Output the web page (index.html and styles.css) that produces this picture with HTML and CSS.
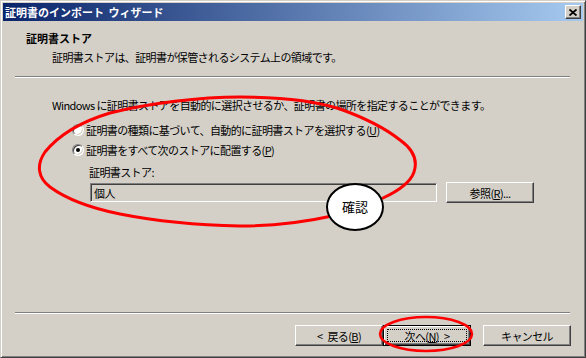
FILE: index.html
```html
<!DOCTYPE html>
<html lang="ja">
<head>
  <meta charset="UTF-8" />
  <title>証明書のインポート ウィザード</title>
  <link rel="stylesheet" href="styles.css">
</head>
<body>

<div class="window">
  <div class="titlebar">
    <span class="title">証明書のインポート ウィザード</span>
    <span class="close-btn">
      <svg width="8" height="7" viewBox="0 0 8 7"><path d="M0.5 0.5 L7.5 6.5 M7.5 0.5 L0.5 6.5" stroke="#000" stroke-width="1.8"/></svg>
    </span>
  </div>

  <div class="header">
    <div class="header-title">証明書ストア</div>
    <div class="header-sub">証明書ストアは、証明書が保管されるシステム上の領域です。</div>
  </div>
  <div class="sep"></div>

  <div class="content">
    <p class="intro">Windows に証明書ストアを自動的に選択させるか、証明書の場所を指定することができます。</p>
    <div class="option first"><span class="radio"></span><span>証明書の種類に基づいて、自動的に証明書ストアを選択する(<u>U</u>)</span></div>
    <div class="option"><span class="radio checked"></span><span>証明書をすべて次のストアに配置する(<u>P</u>)</span></div>
    <div class="store">
      <div class="store-label">証明書ストア:</div>
      <div class="store-row">
        <div class="field">個人</div>
        <div class="btn browse">参照(<u>R</u>)...</div>
      </div>
    </div>
  </div>

  <div class="footer">
    <div class="sep"></div>
    <div class="buttons">
      <div class="btn"><span class="arrow">&lt;</span>戻る(<u>B</u>)</div>
      <div class="btn default"><span class="focus">次へ(<u>N</u>)<span class="arrow next">&gt;</span></span></div>
      <div class="btn cancel">キャンセル</div>
    </div>
  </div>
</div>

<!-- hand drawn marks over the dialog -->
<svg class="marks" width="586" height="358" viewBox="0 0 586 358">
  <path d="M383,198 C396,192 410,184 414,172 C418,160 414,150 400,140 C385,128 365,118 340,109 C310,99 275,97 240,97 C200,97 150,103 110,113 C80,122 58,136 45,152 C36,165 38,178 50,187 C65,198 90,208 120,214 C150,220 190,225 240,226 C275,226 305,222 332,216" fill="none" stroke="#ff0000" stroke-width="3" stroke-linejoin="round" stroke-linecap="round"/>
  <ellipse cx="426" cy="334" rx="46" ry="17" fill="none" stroke="#ff0000" stroke-width="2.5"/>
</svg>
<div class="bubble">確認</div>

</body>
</html>
```

FILE: styles.css
```css
body {
  margin: 0;
  font-family: "Noto Sans CJK JP", sans-serif;
  font-size: 11px;
  line-height: 14px;
  color: #000;
  background: #d4d0c8;
  position: relative;
}

.window {
  box-sizing: border-box;
  width: 586px;
  height: 358px;
  padding: 2px;
  border: 1px solid;
  border-color: #d4d0c8 #404040 #404040 #d4d0c8;
  box-shadow: inset 1px 1px #fff, inset -1px -1px #808080;
  background: #d4d0c8;
  display: flex;
  flex-direction: column;
  letter-spacing: -0.6px;
}

.titlebar {
  height: 18px;
  display: flex;
  align-items: center;
  justify-content: space-between;
  padding: 0 2px;
  background: linear-gradient(to right, #0a246a, #a6caf0);
}

.title {
  color: #fff;
  font-weight: bold;
  font-size: 11px;
  letter-spacing: 0;
  word-spacing: 2px;
}

.close-btn {
  box-sizing: border-box;
  width: 16px;
  height: 14px;
  display: flex;
  align-items: center;
  justify-content: center;
  background: #d4d0c8;
  border: 1px solid;
  border-color: #fff #404040 #404040 #fff;
  box-shadow: inset -1px -1px #808080;
}

.header {
  padding: 10px 0 12px 23px;
}

.header-title {
  font-weight: bold;
  letter-spacing: 0;
}

.header-sub {
  margin-top: 5px;
  padding-left: 26px;
}

.sep {
  margin: 0 13px 0 12px;
  border-top: 1px solid #808080;
  border-bottom: 1px solid #fff;
}

.content {
  padding: 20px 0 0 49px;
}

.intro {
  margin: 0;
}

.option {
  display: flex;
  align-items: center;
  gap: 2px;
  margin-top: 6px;
  padding-left: 20px;
}

.option.first {
  margin-top: 11px;
}

.radio {
  box-sizing: border-box;
  position: relative;
  width: 12px;
  height: 12px;
  border-radius: 50%;
  border: 1px solid;
  border-color: #808080 #fff #fff #808080;
  box-shadow: inset 1px 1px #404040, inset -1px -1px #d4d0c8;
  background: #fff;
}

.radio.checked::after {
  content: "";
  position: absolute;
  left: 3px;
  top: 3px;
  width: 4px;
  height: 4px;
  border-radius: 50%;
  background: #000;
}

.store {
  margin-top: 8px;
  padding-left: 37px;
}

.store-label {
  margin-bottom: 3px;
}

.store-row {
  display: flex;
  align-items: center;
}

.field {
  box-sizing: border-box;
  width: 347px;
  height: 19px;
  margin-left: 1px;
  padding: 2px 3px;
  border: 1px solid;
  border-color: #808080 #fff #fff #808080;
  box-shadow: inset 1px 1px #404040, inset -1px -1px #d4d0c8;
  background: #d4d0c8;
  line-height: 14px;
}

.btn {
  box-sizing: border-box;
  width: 88px;
  height: 21px;
  display: flex;
  align-items: center;
  justify-content: center;
  background: #d4d0c8;
  border: 1px solid;
  border-color: #fff #404040 #404040 #fff;
  box-shadow: inset -1px -1px #808080;
}

.arrow {
  margin-right: 5px;
}

.arrow.next {
  margin: 0 0 0 5px;
}

.browse {
  margin-left: 9px;
}

.footer {
  margin-top: auto;
}

.buttons {
  display: flex;
  justify-content: flex-end;
  padding: 11px 12px 9px 0;
}

.btn.default {
  border-color: #000;
  box-shadow: inset 1px 1px #fff, inset -1px -1px #404040, inset -2px -2px #808080;
  padding: 3px;
}

.focus {
  box-sizing: border-box;
  width: 100%;
  height: 100%;
  display: flex;
  align-items: center;
  justify-content: center;
  border: 1px dotted #000;
}

.btn.cancel {
  margin-left: 12px;
}

.marks {
  position: absolute;
  left: 0;
  top: 0;
  pointer-events: none;
}

.bubble {
  position: absolute;
  left: 326px;
  top: 183px;
  box-sizing: border-box;
  width: 58px;
  height: 48px;
  border: 2px solid #000;
  border-radius: 50%;
  background: #fff;
  display: flex;
  align-items: center;
  justify-content: center;
  font-size: 13px;
}
```
